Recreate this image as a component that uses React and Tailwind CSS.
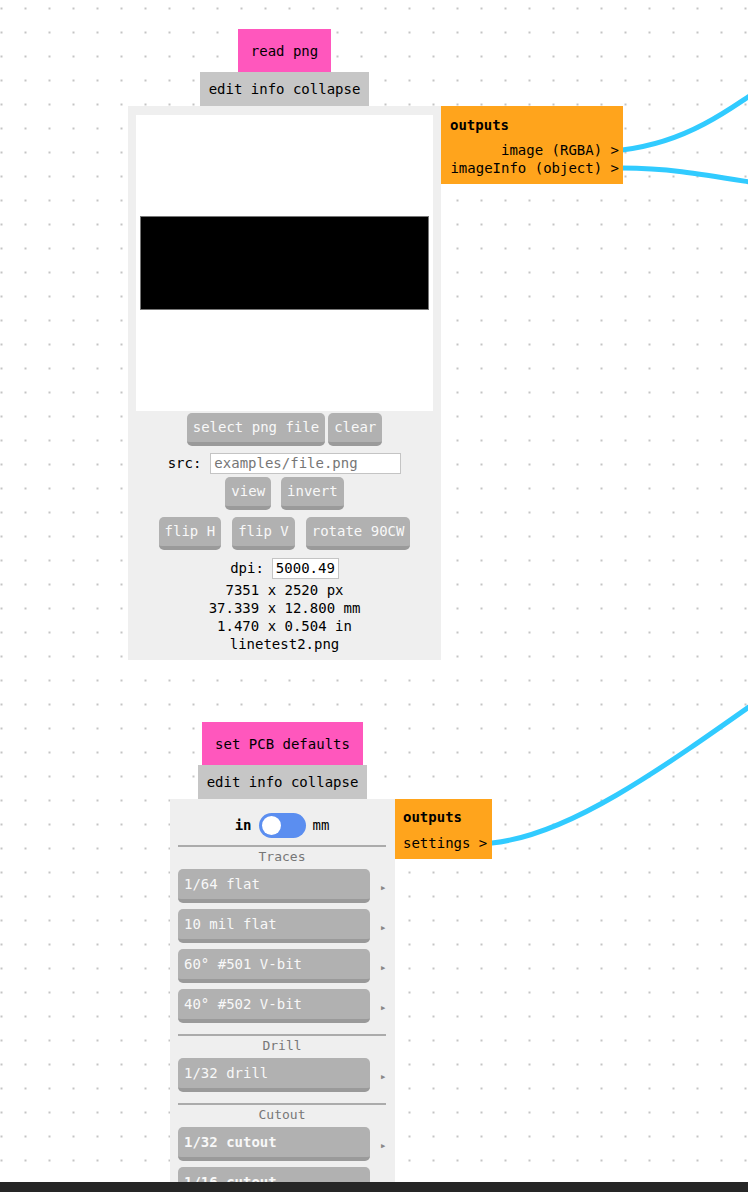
import React from "react";

// Shared look for the grey push buttons inside node bodies
const btn =
  "h-[33px] rounded-[5px] border-b-4 border-[#9a9a9a] bg-[#b1b1b1] px-[6px] leading-[29px] text-[#f8f8f8] whitespace-nowrap";

const NodeHeader = ({ title }) => (
  <div className="flex flex-col items-center">
    <div className="h-[43px] bg-[#ff57bd] px-[13px] leading-[44px] text-black">
      {title}
    </div>
    <div className="h-[34px] bg-[#c6c6c6] px-[9px] leading-[35px] text-black">
      edit info collapse
    </div>
  </div>
);

const ReadPngNode = () => (
  <div className="absolute left-[128px] top-[29px]">
    <div className="w-[313px]">
      <NodeHeader title="read png" />
    </div>
    <div className="flex items-start">
      <div className="flex w-[313px] flex-col items-center bg-[#efefef] px-[8px] pb-[7px] pt-[9px]">
        {/* preview canvas */}
        <div className="flex h-[296px] w-[297px] flex-col bg-white px-[4px] pt-[101px]">
          <div className="h-[94px] w-full border border-[#777] bg-black" />
        </div>
        <div className="mt-[2px] flex gap-[3px]">
          <button className={btn}>select png file</button>
          <button className={btn}>clear</button>
        </div>
        <div className="mt-[7px] flex h-[21px] items-center gap-[9px]">
          <span className="text-black">src:</span>
          <input
            className="h-[21px] w-[191px] border border-[#c4c4c4] bg-white px-[3px] text-[14px] text-black placeholder:text-[#767676]"
            placeholder="examples/file.png"
          />
        </div>
        <div className="mt-[3px] flex gap-[10px]">
          <button className={btn}>view</button>
          <button className={btn}>invert</button>
        </div>
        <div className="mt-[7px] flex gap-[11px]">
          <button className={btn}>flip H</button>
          <button className={btn}>flip V</button>
          <button className={btn}>rotate 90CW</button>
        </div>
        <div className="mt-[8px] flex h-[21px] items-center gap-[8px]">
          <span className="text-black">dpi:</span>
          <input
            className="h-[21px] w-[67px] border border-[#c4c4c4] bg-white px-[3px] text-[14px] text-black"
            defaultValue="5000.498"
          />
        </div>
        <div className="mt-[2px] flex flex-col items-center leading-[18px] text-black">
          <span>7351 x 2520 px</span>
          <span>37.339 x 12.800 mm</span>
          <span>1.470 x 0.504 in</span>
          <span>linetest2.png</span>
        </div>
      </div>
      <div className="flex w-[182px] flex-col whitespace-nowrap bg-[#ffa41c] pb-[7px] pl-[9px] pr-[4px] pt-[10px] leading-[18px] text-black">
        <span className="mb-[7px] font-bold">outputs</span>
        <span className="text-right">image (RGBA) &gt;</span>
        <span className="text-right">imageInfo (object) &gt;</span>
      </div>
    </div>
  </div>
);

const Section = ({ label }) => (
  <>
    <div className="mt-[11px] h-[2px] w-full bg-[#ababab]" />
    <div className="h-[20px] text-center text-[13px] leading-[20px] text-[#777]">
      {label}
    </div>
  </>
);

const ToolRow = ({ name, bold, first }) => (
  <div className={`flex items-center ${first ? "mt-[2px]" : "mt-[6px]"}`}>
    <button
      className={`${btn} h-[34px] w-[192px] text-left leading-[30px] ${bold ? "font-bold" : ""}`}
    >
      {name}
    </button>
    <span className="ml-[11px] mt-[4px] text-[7px] leading-none text-[#888]">
      ▶
    </span>
  </div>
);

const PcbDefaultsNode = () => (
  <div className="absolute left-[170px] top-[722px]">
    <div className="w-[225px]">
      <NodeHeader title="set PCB defaults" />
    </div>
    <div className="flex items-start">
      <div className="flex w-[225px] flex-col bg-[#efefef] pl-[8px] pr-[9px] pt-[14px] pb-[40px]">
        <div className="flex h-[25px] items-center justify-center gap-[7px] text-black">
          <span className="font-bold">in</span>
          <div className="flex h-[25px] w-[47px] items-center rounded-full bg-[#5b8ef0] pl-[3px]">
            <div className="h-[19px] w-[19px] rounded-full bg-white" />
          </div>
          <span>mm</span>
        </div>
        <div className="mt-[7px] h-[2px] w-full bg-[#ababab]" />
        <div className="h-[20px] text-center text-[13px] leading-[20px] text-[#777]">
          Traces
        </div>
        <ToolRow name="1/64 flat" first />
        <ToolRow name="10 mil flat" />
        <ToolRow name="60° #501 V-bit" />
        <ToolRow name="40° #502 V-bit" />
        <Section label="Drill" />
        <ToolRow name="1/32 drill" first />
        <Section label="Cutout" />
        <ToolRow name="1/32 cutout" bold first />
        <ToolRow name="1/16 cutout" bold />
      </div>
      <div className="flex w-[97px] flex-col whitespace-nowrap bg-[#ffa41c] pb-[7px] pl-[8px] pt-[9px] leading-[18px] text-black">
        <span className="mb-[8px] font-bold">outputs</span>
        <span>settings &gt;</span>
      </div>
    </div>
  </div>
);

const Wires = () => (
  <svg
    className="pointer-events-none absolute left-0 top-0"
    width="748"
    height="1182"
    fill="none"
    stroke="#31cbff"
    strokeWidth="5"
    strokeLinecap="round"
  >
    <path d="M622 150 C690 142 730 110 800 60" />
    <path d="M622 168 C680 168 720 178 800 190" />
    <path d="M492 843 C570 835 660 770 780 685" />
  </svg>
);

export default function App() {
  return (
    <div className="flex h-[1192px] w-[748px] flex-col overflow-hidden bg-white font-['DejaVu_Sans_Mono',monospace] text-[14px]">
      <div className="relative flex-1 overflow-hidden bg-[radial-gradient(circle,#c4c4c4_1px,transparent_1.5px)] bg-size-[24px_24px] bg-position-[-10.5px_-3.5px]">
        <Wires />
        <ReadPngNode />
        <PcbDefaultsNode />
      </div>
      <div className="h-[10px] bg-[#262626]" />
    </div>
  );
}
